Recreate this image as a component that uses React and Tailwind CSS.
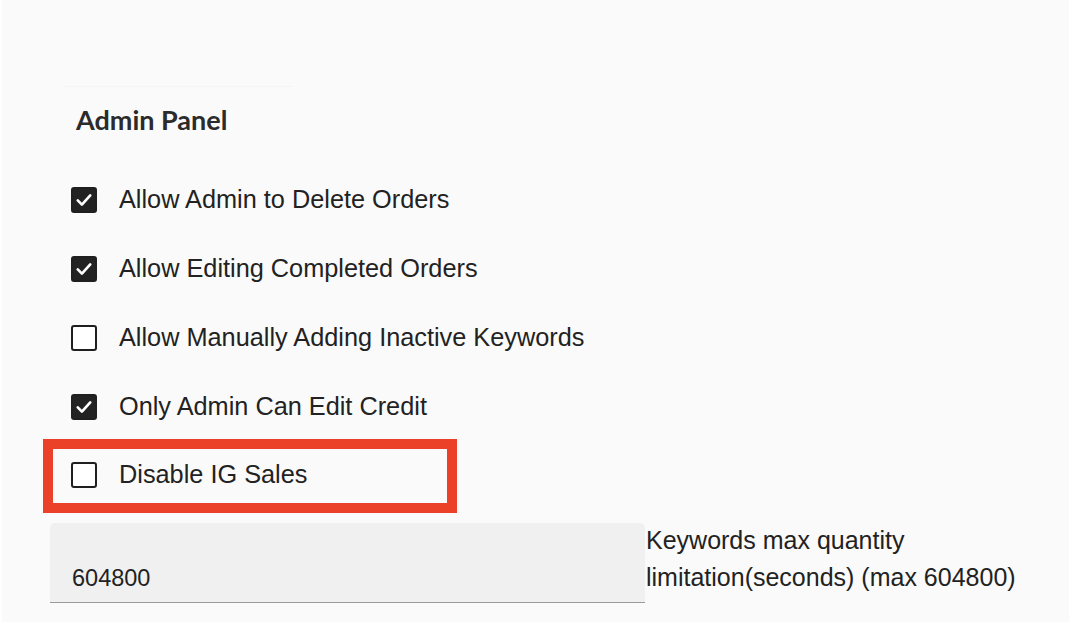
import React from "react";

const options = [
    { id: 1, label: "Allow Admin to Delete Orders", checked: true },
    { id: 2, label: "Allow Editing Completed Orders", checked: true },
    { id: 3, label: "Allow Manually Adding Inactive Keywords", checked: false },
    { id: 4, label: "Only Admin Can Edit Credit", checked: true },
    { id: 5, label: "Disable IG Sales", checked: false, highlight: true },
];

const Box = ({ checked }) => (
    <span className={`flex h-[26px] w-[26px] shrink-0 items-center justify-center rounded-[3px] border-[2.5px] border-[#1f1f1f] ${checked ? "bg-[#222222]" : "bg-white"}`}>
        {checked && (
            <svg viewBox="0 0 24 24" className="h-[20px] w-[20px]" fill="none" stroke="white" strokeWidth="3.2" strokeLinecap="round" strokeLinejoin="round">
                <path d="M4.5 12.5l5 5L19.5 6.5" />
            </svg>
        )}
    </span>
);

const App = () => {
    return (
        <div className="min-h-[622px] w-[1080px] bg-white pl-[2px] pr-[11px] font-[family-name:Liberation_Sans,Arial,sans-serif] text-[#222222]">
            <div className="min-h-[622px] bg-[#fafafa]">
                <div className="h-[86px]" />
                <div className="ml-[62px] h-px w-[228px] bg-[#f4f4f4]" />
                <h2 className="ml-[74px] mt-[18px] font-[family-name:Lato,sans-serif] text-[27px] font-bold leading-[30px] text-[#2b2b2b]">
                    Admin Panel
                </h2>
                <div className="mt-[30px] flex flex-col">
                    {options.map((o) => (
                        <div key={o.id} className={o.highlight ? "-mt-[2px] ml-[41px] w-[414px] border-[10px] border-[#ea4128] pb-[12px] pl-[18px] pt-[9px]" : "ml-[69px] py-[18px]"}>
                            <label className="flex h-[33px] items-center gap-[22px] text-[25.3px] leading-[33px]">
                                <Box checked={o.checked} />
                                <span>{o.label}</span>
                            </label>
                        </div>
                    ))}
                </div>
                <div className="ml-[48px] mt-[10px] flex items-start">
                    <div className="flex h-[80px] w-[595px] items-end rounded-t-[5px] border-b border-[#9a9a9a] bg-[#f0f0f0] px-[22px] pb-[10px] text-[23.5px] leading-[28px]">
                        604800
                    </div>
                    <p className="-mt-[1px] w-[410px] pl-[1px] text-[25px] leading-[37px]">
                        Keywords max quantity limitation(seconds) (max 604800)
                    </p>
                </div>
            </div>
        </div>
    );
};

export default App;
